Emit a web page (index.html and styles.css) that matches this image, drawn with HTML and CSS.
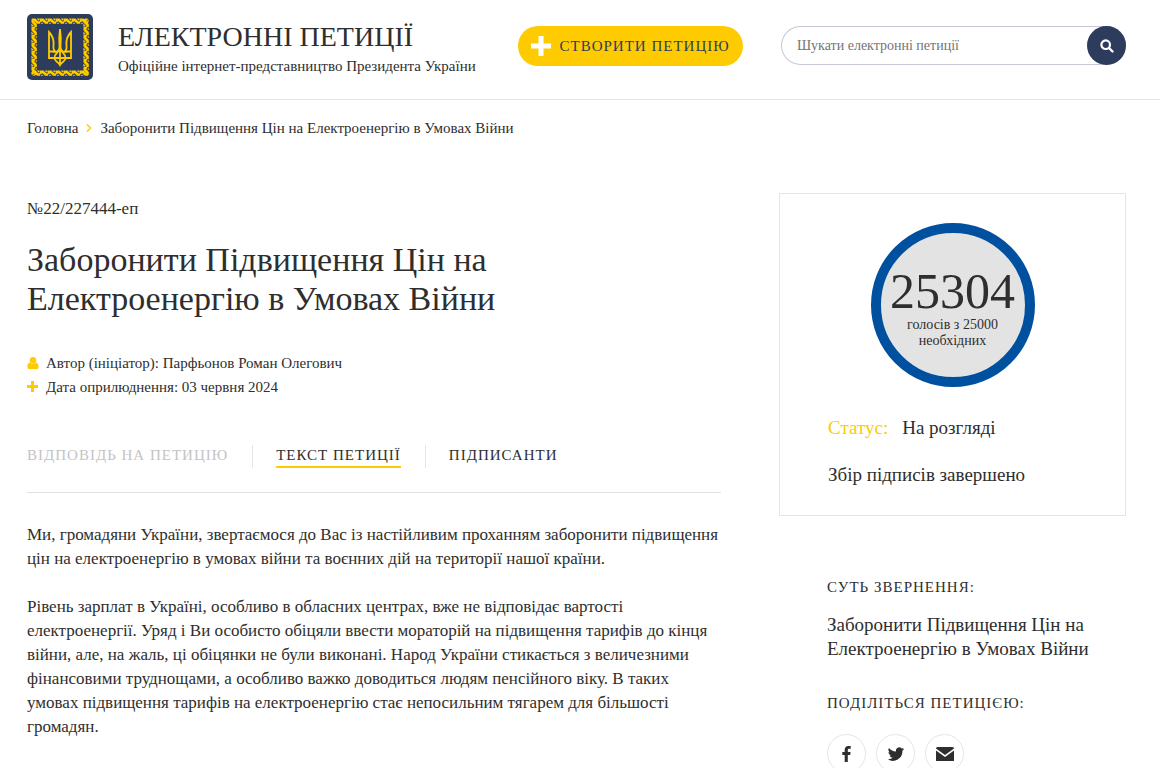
FILE: index.html
```html
<!DOCTYPE html>
<html lang="uk">
<head>
<meta charset="utf-8">
<meta name="viewport" content="width=device-width, initial-scale=1">
<title>Електронні петиції</title>
<link rel="stylesheet" href="styles.css">
</head>
<body>
<header class="header">
  <a class="brand" href="#">
    <svg class="brand-emblem" viewBox="0 0 66 66" aria-hidden="true">
      <defs>
        <g id="leaf"><path d="M-4-2.500H-.5L2.500.5 4 0V2.800H1L-1.500.3-4 1.500Z"/><path d="M.8-2.600H3.600V-.6L2.400-.4Z"/><path d="M-3.600 2.700L-2 1.400-.6 2.700Z"/></g>
        <g id="row">
          <use href="#leaf" x="9"/><use href="#leaf" x="17"/><use href="#leaf" x="25"/><use href="#leaf" x="33"/><use href="#leaf" x="41"/><use href="#leaf" x="49"/><use href="#leaf" x="57"/>
        </g>
      </defs>
      <rect width="66" height="66" rx="5" fill="#2d3c5d"/>
      <g fill="#fecb00">
        <use href="#row" y="7"/>
        <use href="#row" y="59"/>
        <use href="#row" y="7" transform="matrix(0 1 1 0 0 0)"/>
        <use href="#row" y="59" transform="matrix(0 1 1 0 0 0)"/>
      </g>
      <g fill="none" stroke="#fecb00" stroke-width="1.800">
        <path d="M22 18v26h22V18c-4 4-5 9-4.500 14 .4 3-.5 5-2.500 6-3-1-3.500-3-3.500-6l.3-8L33 15l-.8 9 .3 8c0 3-.5 5-3.500 6-2-1-2.900-3-2.500-6 .5-5-.5-10-4.500-14z"/>
        <path d="M22 37.500h3.500q2 0 2.500 1M44 37.500h-3.500q-2 0-2.500 1M27.500 44c0-4 3-5 5.500-9 2.500 4 5.500 5 5.500 9 0 4-3.500 3-5.500 7-2-4-5.500-3-5.500-7zM33 16v35"/>
      </g>
    </svg>
    <span class="brand-text">
      <span class="brand-title">ЕЛЕКТРОННІ ПЕТИЦІЇ</span>
      <span class="brand-sub">Офіційне інтернет-представництво Президента України</span>
    </span>
  </a>
  <a class="create" href="#">
    <svg class="create-icon" viewBox="0 0 20 20" aria-hidden="true"><path d="M7.500 0h5v7.500H20v5h-7.500V20h-5v-7.500H0v-5h7.500z" fill="#fff"/></svg>
    <span>СТВОРИТИ ПЕТИЦІЮ</span>
  </a>
  <form class="search">
    <input class="search-input" type="search" placeholder="Шукати електронні петиції" aria-label="Шукати електронні петиції">
    <button class="search-button" type="button" aria-label="Пошук">
      <svg class="search-icon" viewBox="0 0 14 14" aria-hidden="true"><circle cx="5.700" cy="5.700" r="4.300" fill="none" stroke="#fff" stroke-width="2.200"/><path d="M9 9l3.500 3.500" stroke="#fff" stroke-width="2.400" stroke-linecap="round"/></svg>
    </button>
  </form>
</header>
<nav class="crumbs" aria-label="Навігація">
  <a href="#">Головна</a>
  <svg class="crumb-arrow" viewBox="0 0 6 8" aria-hidden="true"><path d="M1 .5L4.500 4 1 7.500" fill="none" stroke="#fecb00" stroke-width="1.400"/></svg>
  <span>Заборонити Підвищення Цін на Електроенергію в Умовах Війни</span>
</nav>
<main class="layout">
  <article class="petition">
    <p class="number">№22/227444-еп</p>
    <h1 class="title">Заборонити Підвищення Цін на Електроенергію в Умовах Війни</h1>
    <ul class="meta">
      <li><svg class="meta-icon" viewBox="0 0 12 12" aria-hidden="true"><path d="M3 5.500C.8 6 .2 8 .5 10.500Q.7 12 2 12h8q1.300 0 1.500-1.500C11.800 8 11.200 6 9 5.500a4 4 0 0 1-6 0z" fill="#fecb00"/><circle cx="6" cy="3.200" r="3.200" fill="#fecb00"/></svg>Автор (ініціатор): Парфьонов Роман Олегович</li>
      <li><svg class="meta-icon" viewBox="0 0 12 12" aria-hidden="true"><path d="M4 0h3v4h4v3H7v4H4V7H0V4h4z" fill="#fecb00"/></svg>Дата оприлюднення: 03 червня 2024</li>
    </ul>
    <nav class="tabs" aria-label="Розділи петиції">
      <a class="tab tab-disabled" aria-disabled="true"><span>ВІДПОВІДЬ НА ПЕТИЦІЮ</span></a>
      <a class="tab tab-active" href="#text"><span>ТЕКСТ ПЕТИЦІЇ</span></a>
      <a class="tab" href="#signers"><span>ПІДПИСАНТИ</span></a>
    </nav>
    <div class="text" id="text">
      <p>Ми, громадяни України, звертаємося до Вас із настійливим проханням заборонити підвищення цін на електроенергію в умовах війни та воєнних дій на території нашої країни.</p>
      <p>Рівень зарплат в Україні, особливо в обласних центрах, вже не відповідає вартості електроенергії. Уряд і Ви особисто обіцяли ввести мораторій на підвищення тарифів до кінця війни, але, на жаль, ці обіцянки не були виконані. Народ України стикається з величезними фінансовими труднощами, а особливо важко доводиться людям пенсійного віку. В таких умовах підвищення тарифів на електроенергію стає непосильним тягарем для більшості громадян.</p>
    </div>
  </article>
  <aside class="side">
    <section class="votes">
      <div class="circle">
        <span class="count">25304</span>
        <span class="needed">голосів з 25000<br>необхідних</span>
      </div>
      <p class="status"><span class="status-label">Статус:</span><span>На розгляді</span></p>
      <p class="status">Збір підписів завершено</p>
    </section>
    <section class="info">
      <h2 class="info-title">СУТЬ ЗВЕРНЕННЯ:</h2>
      <p class="info-text">Заборонити Підвищення Цін на Електроенергію в Умовах Війни</p>
      <h2 class="info-title">ПОДІЛІТЬСЯ ПЕТИЦІЄЮ:</h2>
      <div class="share">
        <a class="share-link" href="#" aria-label="Facebook"><svg class="share-icon" viewBox="0 0 18 18" aria-hidden="true"><path d="M12.700 1.100v2.700h-1.600c-1.100 0-1.300.6-1.300 1.300v1.900h2.800l-.4 2.900H9.800V17H6.700V9.900H4.300V7h2.400V4.800C6.700 2.300 8.200 1 10.400 1c1 0 1.900.1 2.300.1z"/></svg></a>
        <a class="share-link" href="#" aria-label="Twitter"><svg class="share-icon" viewBox="1 1 22 22" aria-hidden="true"><path d="M22 5.900a8 8 0 0 1-2.300.6 4 4 0 0 0 1.800-2.200 8 8 0 0 1-2.600 1 4.100 4.100 0 0 0-7 3.700A11.600 11.600 0 0 1 3.400 4.700a4.100 4.100 0 0 0 1.300 5.500 4 4 0 0 1-1.900-.5c0 2 1.400 3.700 3.300 4.100a4 4 0 0 1-1.900.1 4.100 4.100 0 0 0 3.900 2.800A8.200 8.200 0 0 1 2 18.400a11.600 11.600 0 0 0 17.900-10.300A8 8 0 0 0 22 5.900z"/></svg></a>
        <a class="share-link" href="#" aria-label="Email"><svg class="share-icon" viewBox="0 0 18 18" aria-hidden="true"><path d="M0 3.500Q0 2 1.500 2h15Q18 2 18 3.500L9 10zM0 5.500l9 6.500 9-6.500V16H0z"/></svg></a>
      </div>
    </section>
  </aside>
</main>
</body>
</html>
```
FILE: styles.css
```css
* {
  box-sizing: border-box;
}

body {
  margin: 0;
  background: #fff;
  color: #2e2e2e;
  font: 15px/24px Georgia, "Liberation Serif", serif;
}

a {
  color: inherit;
  text-decoration: none;
}

h1, h2, p, ul {
  margin: 0;
  padding: 0;
  font-weight: 400;
}

.header {
  display: grid;
  grid-template-columns: 492fr 225px 38fr 345px;
  align-items: start;
  padding: 14px 34px 19px 27px;
  border-bottom: 1px solid #e5e5e5;
}

.brand {
  display: flex;
  gap: 25px;
}

.brand-emblem {
  width: 66px;
  height: 66px;
  flex: none;
}

.brand-text {
  display: flex;
  flex-direction: column;
  padding-top: 6px;
  white-space: nowrap;
}

.brand-title {
  font-size: 28px;
  line-height: 34px;
}

.brand-sub {
  font-size: 15px;
  line-height: 24px;
}

.create {
  display: flex;
  align-items: center;
  justify-content: center;
  gap: 8px;
  height: 40px;
  margin-top: 12px;
  border-radius: 20px;
  background: #fecb00;
  color: #2d3c5d;
  font-size: 15px;
  letter-spacing: 1px;
  white-space: nowrap;
}

.create-icon {
  width: 20px;
  height: 20px;
}

.search {
  grid-column: 4;
  display: flex;
  height: 39px;
  margin-top: 12px;
  border-radius: 20px;
  box-shadow: inset 0 0 0 1px #cbc6d8;
}

.search-input {
  flex: 1;
  min-width: 0;
  padding: 0 16px;
  border: 0;
  background: none;
  color: inherit;
  font: inherit;
  font-size: 14px;
  outline: 0;
}

.search-input::placeholder {
  color: #757575;
}

.search-button {
  display: grid;
  place-items: center;
  width: 39px;
  padding: 0;
  border: 0;
  border-radius: 50%;
  background: #2d3c5d;
}

.search-icon {
  width: 14px;
  height: 14px;
}

.crumbs {
  display: flex;
  align-items: center;
  gap: 8px;
  padding: 16px 27px;
}

.crumb-arrow {
  width: 6px;
  height: 8px;
}

.layout {
  display: grid;
  grid-template-columns: 2fr 1fr;
  gap: 58px;
  padding: 37px 34px 40px 27px;
}

.number {
  padding-top: 4px;
  font-size: 17px;
}

.title {
  max-width: 500px;
  margin-top: 19px;
  font-size: 34px;
  line-height: 39px;
}

.meta {
  margin-top: 33px;
  list-style: none;
}

.meta li {
  display: flex;
  align-items: center;
  gap: 7px;
}

.meta-icon {
  width: 12px;
  height: 12px;
}

.tabs {
  display: flex;
  margin-top: 46px;
  padding-bottom: 24px;
  border-bottom: 1px solid #e0e0e0;
  letter-spacing: 1px;
  line-height: 21px;
}

.tab {
  padding-right: 24px;
}

.tab + .tab {
  padding-left: 23px;
  border-left: 1px solid #e5e5e5;
}

.tab span {
  display: block;
  border-bottom: 2px solid transparent;
}

.tab-disabled {
  color: #c4c4c4;
}

.tab-active span {
  border-color: #fecb00;
}

.text {
  padding-top: 30px;
  font-size: 17px;
}

.text p + p {
  margin-top: 24px;
}

.votes {
  padding: 29px 48px 28px;
  border: 1px solid #e5e5e5;
}

.circle {
  display: flex;
  flex-direction: column;
  align-items: center;
  width: 164px;
  height: 164px;
  margin: 0 auto 29px;
  padding-top: 32px;
  border: 10px solid #0050a0;
  border-radius: 50%;
  background: #e3e3e3;
}

.count {
  font-size: 50px;
  line-height: 52px;
}

.needed {
  font-size: 14px;
  line-height: 16px;
  text-align: center;
}

.status {
  display: flex;
  gap: 14px;
  font-size: 19px;
}

.status + .status {
  margin-top: 23px;
}

.status-label {
  color: #fecb00;
}

.info {
  padding: 59px 20px 0 48px;
}

.info-title {
  font-size: 15px;
  letter-spacing: 1px;
}

.info-text {
  margin: 14px 0 30px;
  font-size: 19px;
}

.share {
  display: flex;
  gap: 10px;
  margin-top: 19px;
}

.share-link {
  display: grid;
  place-items: center;
  width: 39px;
  height: 39px;
  border: 1px solid #e5e5e5;
  border-radius: 50%;
}

.share-icon {
  width: 18px;
  height: 18px;
  fill: #2e2e2e;
}
```
